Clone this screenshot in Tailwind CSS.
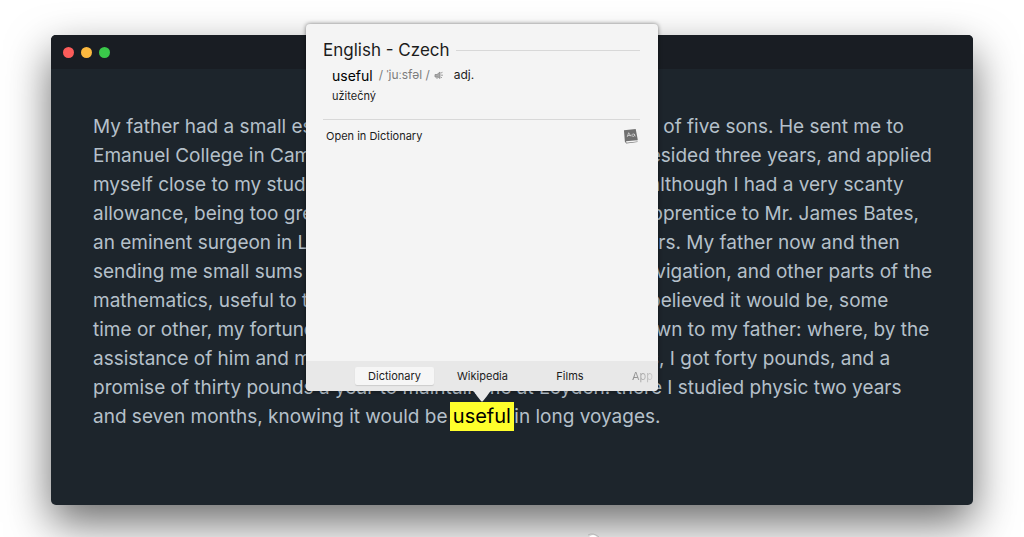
<!DOCTYPE html>
<html lang="en">
<head>
<meta charset="utf-8">
<title>Dictionary lookup</title>
<script src="https://cdn.jsdelivr.net/npm/@tailwindcss/browser@4"></script>
</head>
<body class="relative min-h-screen overflow-hidden bg-white px-[51px] pt-[35px] font-['Inter','Noto_Sans',sans-serif]">
<main class="rounded-[5px] bg-[#1d252c] shadow-[0_18px_44px_rgba(0,0,0,0.58)]">
  <header class="flex h-[34px] items-center gap-[7px] rounded-t-[5px] bg-[#191d23] px-3">
    <button aria-label="Close" class="size-[11px] rounded-full bg-[#fc5c5a]"></button>
    <button aria-label="Minimize" class="size-[11px] rounded-full bg-[#fdb93f]"></button>
    <button aria-label="Zoom" class="size-[11px] rounded-full bg-[#3ac84a]"></button>
  </header>
  <p class="px-[42px] pt-[43px] pb-[74px] text-[19px] leading-[29px] whitespace-nowrap text-[#b5c0ca]">
    My father had a small estate in Nottinghamshire: I was the third of five sons. He sent me to<br>
    Emanuel College in Cambridge at fourteen years old, where I resided three years, and applied<br>
    myself close to my studies; but the charge of maintaining me, although I had a very scanty<br>
    allowance, being too great for a narrow fortune, I was bound apprentice to Mr. James Bates,<br>
    an eminent surgeon in London, with whom I continued four years. My father now and then<br>
    sending me small sums of money, I laid them out in learning navigation, and other parts of the<br>
    mathematics, useful to those who intend to travel, as I always believed it would be, some<br>
    time or other, my fortune to do. When I left Mr. Bates, I went down to my father: where, by the<br>
    assistance of him and my uncle John, and some other relations, I got forty pounds, and a<br>
    promise of thirty pounds a year to maintain me at Leyden: there I studied physic two years<br>
    and seven months, knowing it would be <mark class="-mr-[5px] -ml-[3px] inline-block bg-[#ffff2b] px-[3px] align-top text-[20px] text-black">useful</mark> in long voyages.
  </p>
</main>

<section role="dialog" aria-label="Dictionary lookup" class="absolute top-[24px] left-[306px] flex h-[367px] w-[352px] flex-col rounded-[4px] bg-[#f4f4f4] text-[#1c1c1c] shadow-[0_0_4px_rgba(0,0,0,0.5)]">
  <div class="grow pt-[14px] pr-[18px] pl-[17px]">
    <div class="flex items-center gap-[6px]">
      <h1 class="text-[17px] leading-[24px]">English - Czech</h1>
      <hr class="grow border-[#d8d8d8]">
    </div>
    <div class="flex h-[26px] items-center pl-[9px] text-[12px]">
      <span class="mr-[6px] text-[14px] text-black">useful</span>
      <span class="text-[#7c7c7c]">/ ˈjuːsfəl /</span>
      <button aria-label="Play pronunciation" class="ml-[4px]">
        <svg class="size-[9px]" viewBox="0 0 9 9" fill="none" stroke="#8b8b8b" stroke-width=".8"><path d="M1 3.500h2L6 1v6.500L4 6H1zM3 6v2" fill="#aaa"/><path d="M7 2l1.500-.7M7 4.200h2M7 6l1 1"/></svg>
      </button>
      <span class="ml-[11px]">adj.</span>
    </div>
    <p class="pl-[9px] text-[11px] leading-[16px]">užitečný</p>
    <hr class="mt-[15px] border-[#d8d8d8]">
    <a href="#" class="mt-2 flex items-center justify-between pr-[1px] pl-[3px] text-[11px]">
      Open in Dictionary
      <svg class="size-[16px]" viewBox="0 0 17 17"><path d="M1 2.500 13.500 1l2.200 11.500-.8.700.5 1.800L3.500 16.500 2 14.500z" fill="#707070"/><path d="m3.200 14.200 11.500-1.300.3 1.500-11.300 1.300z" fill="#f4f4f4"/><path d="M4.500 9.500 6 5l2.500 4M5 8h3m4-1.500c-3-1-3.500 2.500-1 2.500 1 0 1.500-1 1-2.500l1 2.500" fill="none" stroke="#ddd" stroke-width=".8"/></svg>
    </a>
  </div>
  <nav aria-label="Sources" class="flex h-[30px] items-center overflow-hidden rounded-b-[4px] bg-[#e8e8e8] pl-[49px] text-[11px] whitespace-nowrap">
    <button class="h-[18px] w-[79px] shrink-0 rounded-[2px] bg-[#f6f6f6] shadow-[0_1px_1px_rgba(0,0,0,0.12)]">Dictionary</button>
    <button class="w-[97px] shrink-0">Wikipedia</button>
    <button class="w-[78px] shrink-0">Films</button>
    <button class="ml-[23px] shrink-0 bg-linear-to-r from-[#888888] to-[#d0d0d0] bg-clip-text text-transparent">App</button>
  </nav>
  <svg class="absolute top-[366px] left-[165px] h-[12px] w-[22px]" viewBox="0 0 22 12"><path d="M0 0h22c-3 1-4 3-6 6l-4 5q-1 1-2 0L6 6C4 3 3 1 0 0z" fill="#e8e8e8"/></svg>
</section>
<svg class="absolute bottom-0 left-[586px] h-[4px] w-[15px]" viewBox="0 0 15 4" fill="none"><path d="M2 2Q7-1 13 4" stroke="#aaa" stroke-width=".7"/><path d="M3 4q4-4 8 0" fill="#fff"/></svg>
</body>
</html>
